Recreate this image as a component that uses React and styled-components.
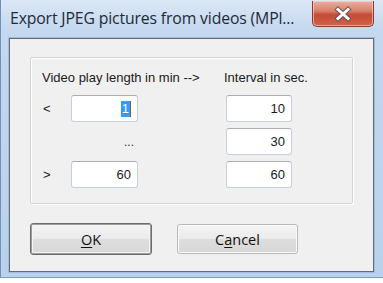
import React from 'react';
import styled, { createGlobalStyle } from 'styled-components';

const GlobalStyle = createGlobalStyle`
  html, body {
    margin: 0;
    padding: 0;
    background: #ffffff;
  }
  body {
    font-family: "Liberation Sans", Arial, sans-serif;
  }
`;

const Frame = styled.div`
  width: 383px;
  height: 278px;
  box-sizing: border-box;
  display: flex;
  flex-direction: column;
  padding: 0 9px 5px 8px;
  background: linear-gradient(180deg, #dbe7f5 0px, #c4d8ef 30px, #b9d1ea 100%);
  border-left: 1px solid #6f91bd;
  border-bottom: 1px solid #7d9cc4;
`;

const TitleBar = styled.div`
  height: 38px;
  display: flex;
  align-items: flex-start;
  justify-content: space-between;
`;

const Title = styled.div`
  padding: 7px 0 0 1px;
  font-family: "Open Sans", "Noto Sans", sans-serif;
  font-size: 15.8px;
  color: #1e2a38;
  letter-spacing: -0.15px;
  white-space: nowrap;
`;

const CloseButton = styled.div`
  width: 62px;
  height: 26px;
  margin-top: 1px;
  box-sizing: border-box;
  border: 1px solid #8a3a30;
  border-top: none;
  border-radius: 0 0 5px 5px;
  background: linear-gradient(180deg, #e9b1a3 0%, #d8806b 40%, #c44a36 55%, #d0634b 100%);
  box-shadow: inset 0 0 0 1px rgba(255, 225, 215, 0.55);
  display: flex;
  align-items: center;
  justify-content: center;
`;

const Client = styled.div`
  flex: 1;
  box-sizing: border-box;
  background: #f0f0f0;
  border: 1px solid #5f6b79;
  box-shadow: 0 0 0 1px #a6bcd6;
  padding: 18px 0 0 20px;
  display: flex;
  flex-direction: column;
`;

const GroupBox = styled.div`
  width: 323px;
  height: 147px;
  box-sizing: border-box;
  border: 1px solid #d5d5d5;
  box-shadow: inset 1px 1px 0 #ffffff, 1px 1px 0 #ffffff;
  border-radius: 2px;
  padding: 12px 0 0 11px;
`;

const Grid = styled.div`
  display: grid;
  grid-template-columns: 29px 67px 88px 66px;
  grid-auto-rows: 27px;
  row-gap: 6px;
  align-items: center;
`;

const HeaderRow = styled.div`
  display: grid;
  grid-template-columns: 182px auto;
  height: 16px;
  margin-bottom: 9px;
  font-size: 13px;
  color: #1a1a1a;
  white-space: nowrap;
`;

const Label = styled.span`
  font-size: 13px;
  color: #1a1a1a;
  padding-left: 1px;
`;

const Field = styled.div`
  grid-column: ${({ col }) => col};
  height: 27px;
  box-sizing: border-box;
  border: 1px solid #c5d0dc;
  border-top-color: #abadb3;
  border-radius: 3px;
  background: #ffffff;
  display: flex;
  align-items: center;
  justify-content: flex-end;
  padding-right: 6px;
  font-size: 13px;
  color: #1a1a1a;
`;

const Selected = styled.span`
  background: #3399ff;
  color: #ffffff;
  padding: 0 1px;
  line-height: 16px;
  border-right: 1px solid #9a5b1e;
`;

const Dots = styled.span`
  grid-column: 2;
  justify-self: end;
  padding-right: 4px;
  font-size: 12px;
  color: #333;
`;

const ButtonRow = styled.div`
  display: flex;
  gap: 25px;
  margin-top: 19px;
  align-items: center;
`;

const Button = styled.div`
  width: ${({ w }) => w}px;
  height: ${({ h }) => h}px;
  box-sizing: border-box;
  border: 1px solid ${({ primary }) => (primary ? '#6d6d6d' : '#b8b8b8')};
  box-shadow: ${({ primary }) => (primary ? 'inset 0 0 0 1px #9c9c9c, inset 0 0 0 2px #f4f4f4' : 'inset 0 0 0 1px #fbfbfb')};
  border-radius: 3px;
  background: linear-gradient(180deg, #f4f4f4 0%, #ebebeb 48%, #dddddd 52%, #d8d8d8 100%);
  display: flex;
  align-items: center;
  justify-content: center;
  font-family: "Open Sans", "Noto Sans", sans-serif;
  font-size: 14.5px;
  color: #111;
  u {
    text-decoration: underline;
    text-underline-offset: 2px;
  }
`;

const CloseIcon = () => (
  <svg width="20" height="16" viewBox="0 0 20 16">
    <path d="M5 3.5 L15 12.5 M15 3.5 L5 12.5" stroke="#6a5450" strokeWidth="5" strokeLinecap="square" />
    <path d="M5 3.5 L15 12.5 M15 3.5 L5 12.5" stroke="#ffffff" strokeWidth="3" strokeLinecap="square" />
  </svg>
);

export default function App() {
  return (
    <>
      <GlobalStyle />
      <Frame>
        <TitleBar>
          <Title>Export JPEG pictures from videos (MPl...</Title>
          <CloseButton>
            <CloseIcon />
          </CloseButton>
        </TitleBar>
        <Client>
          <GroupBox>
            <HeaderRow>
              <span>Video play length in min --&gt;</span>
              <span>Interval in sec.</span>
            </HeaderRow>
            <Grid>
              <Label>&lt;</Label>
              <Field col={2}>
                <Selected>1</Selected>
              </Field>
              <Field col={4}>10</Field>

              <Dots>...</Dots>
              <Field col={4}>30</Field>

              <Label>&gt;</Label>
              <Field col={2}>60</Field>
              <Field col={4}>60</Field>
            </Grid>
          </GroupBox>
          <ButtonRow>
            <Button primary w={122} h={32}>
              <span><u>O</u>K</span>
            </Button>
            <Button w={121} h={30}>
              <span>C<u>a</u>ncel</span>
            </Button>
          </ButtonRow>
        </Client>
      </Frame>
    </>
  );
}
